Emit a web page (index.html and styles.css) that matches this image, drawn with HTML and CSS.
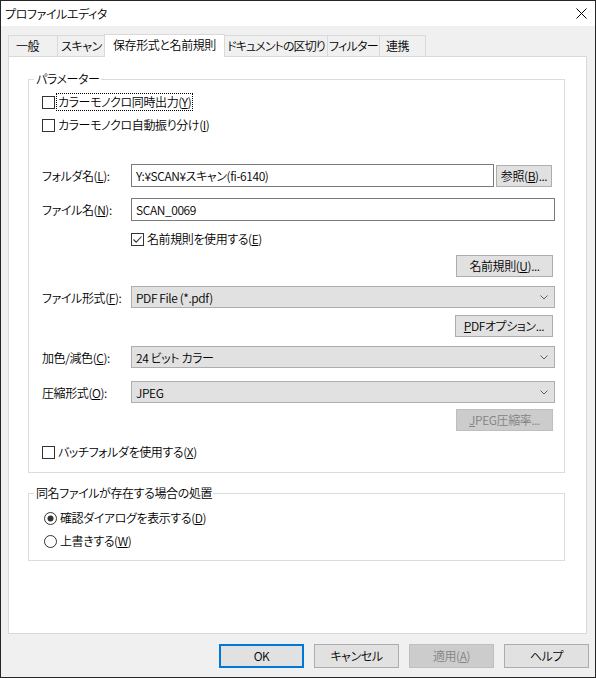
FILE: index.html
```html
<!DOCTYPE html>
<html lang="ja">
<head>
<meta charset="utf-8">
<title>プロファイルエディタ</title>
<link rel="stylesheet" href="styles.css">
</head>
<body>
<div class="window">
  <div class="titlebar">
    <span class="title">プロファイルエディタ</span>
    <svg class="close" width="11" height="11" viewBox="0 0 11 11"><path d="M0.5 0.5 L10.5 10.5 M10.5 0.5 L0.5 10.5" stroke="#000" stroke-width="1" fill="none"/></svg>
  </div>
  <div class="client">
    <div class="tabs">
      <div class="tab t1">一般</div>
      <div class="tab t2">スキャン</div>
      <div class="tab t3 selected">保存形式と名前規則</div>
      <div class="tab t4">ドキュメントの区切り</div>
      <div class="tab t5">フィルター</div>
      <div class="tab t6">連携</div>
    </div>
    <div class="panel">
      <div class="group g1">
        <div class="legend">パラメーター</div>
        <div class="check row-c1">
          <span class="box"></span>
          <span class="ctext focus">カラーモノクロ同時出力(<u>Y</u>)</span>
        </div>
        <div class="check row-c2">
          <span class="box"></span>
          <span class="ctext">カラーモノクロ自動振り分け(<u>I</u>)</span>
        </div>
        <div class="field row-folder">
          <span class="label">フォルダ名(<u>L</u>):</span>
          <div class="edit edit-folder">Y:¥SCAN¥スキャン(fi-6140)</div>
          <div class="btn btn-browse">参照(<u>B</u>)...</div>
        </div>
        <div class="field row-file">
          <span class="label">ファイル名(<u>N</u>):</span>
          <div class="edit edit-file">SCAN_0069</div>
        </div>
        <div class="check row-rule">
          <span class="box"><svg width="11" height="11" viewBox="0 0 11 11"><path d="M1.5 5.5 L4.2 8.2 L9.5 2.5" stroke="#333" stroke-width="1.1" fill="none"/></svg></span>
          <span class="ctext">名前規則を使用する(<u>E</u>)</span>
        </div>
        <div class="btnrow row-rulebtn">
          <div class="btn btn-rule">名前規則(<u>U</u>)...</div>
        </div>
        <div class="field row-format">
          <span class="label">ファイル形式(<u>F</u>):</span>
          <div class="combo"><span>PDF File (*.pdf)</span><svg class="chev" width="8" height="5" viewBox="0 0 8 5"><path d="M0.5 0.5 L4 4 L7.5 0.5" stroke="#606060" fill="none"/></svg></div>
        </div>
        <div class="btnrow row-pdf">
          <div class="btn btn-pdf"><u>P</u>DFオプション...</div>
        </div>
        <div class="field row-color">
          <span class="label">加色/減色(<u>C</u>):</span>
          <div class="combo"><span>24 ビット カラー</span><svg class="chev" width="8" height="5" viewBox="0 0 8 5"><path d="M0.5 0.5 L4 4 L7.5 0.5" stroke="#606060" fill="none"/></svg></div>
        </div>
        <div class="field row-comp">
          <span class="label">圧縮形式(<u>O</u>):</span>
          <div class="combo"><span>JPEG</span><svg class="chev" width="8" height="5" viewBox="0 0 8 5"><path d="M0.5 0.5 L4 4 L7.5 0.5" stroke="#606060" fill="none"/></svg></div>
        </div>
        <div class="btnrow row-jpeg">
          <div class="btn btn-jpeg disabled"><u>J</u>PEG圧縮率...</div>
        </div>
        <div class="check row-batch">
          <span class="box"></span>
          <span class="ctext">バッチフォルダを使用する(<u>X</u>)</span>
        </div>
      </div>
      <div class="group g2">
        <div class="legend">同名ファイルが存在する場合の処置</div>
        <div class="radio row-r1">
          <svg class="rbox" width="13" height="13" viewBox="0 0 13 13"><circle cx="6.5" cy="6.5" r="6" fill="#fff" stroke="#333"/><circle cx="6.5" cy="6.5" r="3" fill="#333"/></svg>
          <span class="ctext">確認ダイアログを表示する(<u>D</u>)</span>
        </div>
        <div class="radio row-r2">
          <svg class="rbox" width="13" height="13" viewBox="0 0 13 13"><circle cx="6.5" cy="6.5" r="6" fill="#fff" stroke="#333"/></svg>
          <span class="ctext">上書きする(<u>W</u>)</span>
        </div>
      </div>
    </div>
    <div class="buttons">
      <div class="btn dlg ok">OK</div>
      <div class="btn dlg">キャンセル</div>
      <div class="btn dlg disabled">適用(<u>A</u>)</div>
      <div class="btn dlg">ヘルプ</div>
    </div>
  </div>
</div>
</body>
</html>
```

FILE: styles.css
```css
* { box-sizing: border-box; }
html, body { margin: 0; padding: 0; background: #fff; }
body {
  font-family: "Noto Sans CJK JP", sans-serif;
  font-size: 12px;
  font-weight: 350;
  font-feature-settings: "palt";
  letter-spacing: -0.4px;
  color: #000;
}
u { text-decoration: underline; text-underline-offset: 1px; }

.window {
  width: 596px;
  height: 678px;
  border: 1px solid #262626;
  display: flex;
  flex-direction: column;
  background: #f0f0f0;
}
.titlebar {
  height: 25px;
  background: #fff;
  display: flex;
  align-items: center;
  justify-content: space-between;
  padding: 0 8px 0 4px;
  flex: none;
}
.title { line-height: 16px; }
.close { display: block; }

.client {
  flex: 1;
  display: flex;
  flex-direction: column;
  padding-top: 8px;
}
.tabs {
  height: 22px;
  margin: 0 8px 0 7px;
  display: flex;
  align-items: flex-end;
  position: relative;
  z-index: 1;
}
.tab {
  height: 21px;
  border: 1px solid #d9d9d9;
  border-bottom: none;
  background: #f0f0f0;
  text-align: center;
  line-height: 19px;
  margin-left: -1px;
  white-space: nowrap;
}
.tab.t1 { width: 50px; margin-left: 0; text-align: left; padding-left: 7px; }
.tab.t2 { width: 49px; }
.tab.t3 { width: 121px; margin-left: -2px; }
.tab.t4 { width: 104px; letter-spacing: -0.9px; }
.tab.t5 { width: 53px; letter-spacing: -0.7px; }
.tab.t6 { width: 47px; text-align: left; padding-left: 6px; }
.tab.selected {
  height: 23px;
  background: #fff;
  margin-bottom: -1px;
  line-height: 19px;
}

.panel {
  height: 578px;
  margin: 0 8px 0 7px;
  background: #fff;
  border: 1px solid #d9d9d9;
  padding: 15px 21px 0 19px;
  flex: none;
}

.group {
  border: 1px solid #dcdcdc;
  padding: 0 9px 12px 13px;
}
.g1 { margin-top: 7px; }
.g2 { margin-top: 20px; padding-bottom: 11px; }
.legend {
  display: table;
  background: #fff;
  height: 16px;
  line-height: 16px;
  margin: -9px 0 0 -8px;
  padding: 0 1px 0 2px;
}

.check, .radio {
  height: 16px;
  display: flex;
  align-items: center;
  line-height: 16px;
}
.box {
  width: 13px;
  height: 13px;
  border: 1px solid #333;
  background: #fff;
  flex: none;
  margin-right: 3px;
  display: flex;
  align-items: center;
  justify-content: center;
}
.box svg { display: block; }
.rbox { display: block; flex: none; margin: 0 3px 0 2px; }
.ctext { white-space: nowrap; }
.focus {
  outline: 1px dotted #000;
  outline-offset: 0;
  padding: 0 1px;
  margin-left: -1px;
}

.field {
  display: flex;
  align-items: center;
}
.label {
  width: 89px;
  flex: none;
  white-space: nowrap;
}
.edit {
  height: 23px;
  border: 1px solid #7a7a7a;
  background: #fff;
  padding: 0 4px;
  line-height: 21px;
  white-space: nowrap;
}
.edit-folder { width: 363px; }
.edit-file { flex: 1; }

.btn {
  height: 22px;
  background: #e1e1e1;
  border: 1px solid #adadad;
  line-height: 20px;
  text-align: center;
  white-space: nowrap;
}
.btn.disabled {
  background: #cccccc;
  border-color: #bfbfbf;
  color: #838383;
}
.btn-browse { width: 56px; margin-left: 2px; }
.btnrow { display: flex; justify-content: flex-end; padding-right: 2px; }
.btn-rule { width: 97px; }
.btn-pdf { width: 98px; }
.btn-jpeg { width: 97px; }

.combo {
  flex: 1;
  height: 22px;
  background: #e1e1e1;
  border: 1px solid #adadad;
  display: flex;
  align-items: center;
  justify-content: space-between;
  padding: 0 6px 0 4px;
  white-space: nowrap;
}
.chev { display: block; }

.row-c1 { margin-top: 7px; }
.row-c2 { margin-top: 7px; }
.row-folder { margin-top: 31px; }
.row-file { margin-top: 11px; }
.row-rule { margin-top: 10px; margin-left: 89px; }
.row-rulebtn { margin-top: 8px; }
.row-format { margin-top: 9px; }
.row-pdf { margin-top: 7px; }
.row-color { margin-top: 9px; }
.row-comp { margin-top: 13px; }
.row-jpeg { margin-top: 6px; }
.row-batch { margin-top: 13px; }
.row-r1 { margin-top: 9px; }
.row-r2 { margin-top: 7px; }

.buttons {
  display: flex;
  justify-content: flex-end;
  gap: 10px;
  margin-top: 10px;
  padding-right: 6px;
}
.btn.dlg {
  width: 85px;
  height: 24px;
  line-height: 22px;
}
.btn.ok {
  border: 2px solid #0078d7;
  line-height: 20px;
}
```
